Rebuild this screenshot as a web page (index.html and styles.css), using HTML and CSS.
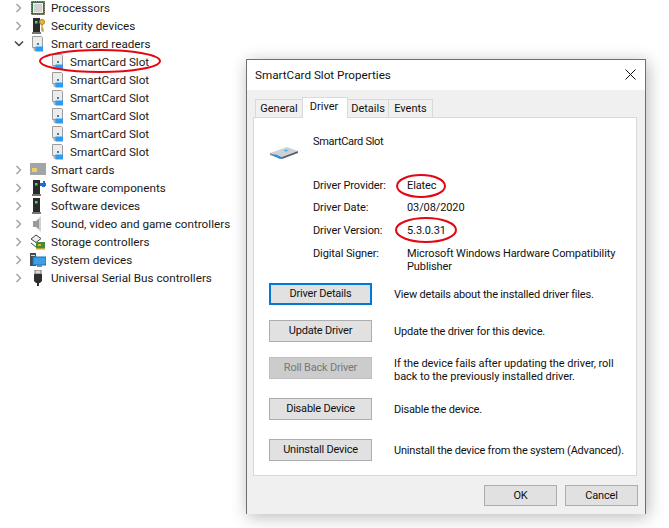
FILE: index.html
```html
<!DOCTYPE html>
<html lang="en">
<head>
<meta charset="utf-8">
<title>SmartCard Slot Properties</title>
<link rel="stylesheet" href="styles.css">
</head>
<body>
<svg class="sprite" width="0" height="0" aria-hidden="true">
  <symbol id="chev-r" viewBox="0 0 8 10"><path d="M1.500 1l4 4-4 4" fill="none" stroke="#a6a6a6" stroke-width="1.500"/></symbol>
  <symbol id="chev-d" viewBox="0 0 10 8"><path d="M1 1.500l4 4 4-4" fill="none" stroke="#404040" stroke-width="1.500"/></symbol>
  <symbol id="reader" viewBox="0 0 16 16">
    <path d="M2.500 .5h9l1 1v10h-10z" fill="#ececec" stroke="#9c9c9c"/>
    <path d="M3 12h3v3H4z" fill="#b5b5b5"/>
    <rect x="7" y="7" width="2" height="2" fill="#1e88d8"/>
    <rect x="5.500" y="10.500" width="7.500" height="5" fill="#2f9bee"/>
  </symbol>
  <symbol id="cpu" viewBox="0 0 16 16">
    <rect x="1.500" y="1.500" width="13" height="13" fill="#3f6f4d" stroke="#5a4a20" stroke-dasharray="1 .8"/>
    <rect x="3.500" y="3.500" width="9" height="9" fill="#cfd2cf" stroke="#eef0ee"/>
  </symbol>
  <symbol id="tower" viewBox="0 0 16 16">
    <rect x="3" y="0" width="7" height="14" fill="#2b2b2b"/>
    <rect x="2" y="14" width="9" height="2" fill="#777"/>
    <rect x="5" y="3" width="2.500" height="2.500" fill="#3fe05a"/>
  </symbol>
  <symbol id="key" viewBox="0 0 16 16">
    <use href="#tower"/>
    <circle cx="12" cy="4" r="2.500" fill="#e8b84a" stroke="#a87f20"/>
    <path d="M12 6.500v7M12 11h2M12 13h2" stroke="#b98d2c" stroke-width="1.200"/>
  </symbol>
  <symbol id="soft" viewBox="0 0 16 16">
    <use href="#tower"/>
    <path d="M10 3h3V1h2v2h1v3h-1v1h-3V6h-2z" fill="#1e6fd0"/>
  </symbol>
  <symbol id="cards" viewBox="0 0 16 16">
    <rect x="0" y="1" width="16" height="12" fill="#a0a5a8"/>
    <rect x="2" y="6" width="5" height="4" fill="#f0cf6a"/>
  </symbol>
  <symbol id="speaker" viewBox="0 0 16 16">
    <path d="M3 5h3l5-4.500v15L6 11H3z" fill="#9a9a9a"/>
    <path d="M9 2l2-1.500v15L9 14z" fill="#d0d0d0"/>
  </symbol>
  <symbol id="storage" viewBox="0 0 16 16">
    <path d="M1 5l5-4 5 3.500-5 4z" fill="#eee" stroke="#444"/>
    <path d="M1 9l5 4 2-1.500" fill="none" stroke="#444"/>
    <rect x="6" y="8" width="9" height="6" fill="#3f8f3f"/>
    <rect x="8" y="10" width="3" height="2" fill="#e0b030"/>
    <rect x="6" y="14" width="9" height="1.500" fill="#c8a030"/>
  </symbol>
  <symbol id="system" viewBox="0 0 16 16">
    <rect x="0" y="1" width="6" height="13" fill="#4a4a4a"/>
    <rect x="1" y="3" width="4" height="1" fill="#ddd"/>
    <rect x="3" y="5" width="13" height="8" fill="#3aa0e8" stroke="#1c6fb0"/>
    <rect x="7" y="13" width="5" height="2" fill="#888"/>
  </symbol>
  <symbol id="usb" viewBox="0 0 16 16">
    <rect x="5" y="0" width="6" height="4" fill="#d8d8d8" stroke="#777"/>
    <path d="M4 4h8v7l-2 2H6l-2-2z" fill="#2f2f2f"/>
    <rect x="7" y="13" width="2" height="3" fill="#2f2f2f"/>
  </symbol>
  <symbol id="device" viewBox="0 0 32 16">
    <path d="M2 8L19 2l11 4-16 6z" fill="#cfd1d4"/>
    <path d="M2 8l12 4v2L2 10z" fill="#8a8e93"/>
    <path d="M14 12l16-6v2l-16 6z" fill="#5c6065"/>
    <path d="M4 10l8 4 3-1-7-3.500z" fill="#1f8fe8"/>
    <path d="M15 5.500l3-1 3 1-3 1z" fill="#4fb0f0"/>
  </symbol>
</svg>

<ul class="tree">
  <li class="node"><svg class="chev"><use href="#chev-r"/></svg><svg class="icon"><use href="#cpu"/></svg><span class="label">Processors</span></li>
  <li class="node"><svg class="chev"><use href="#chev-r"/></svg><svg class="icon"><use href="#key"/></svg><span class="label">Security devices</span></li>
  <li class="node"><svg class="chev"><use href="#chev-d"/></svg><svg class="icon"><use href="#reader"/></svg><span class="label">Smart card readers</span></li>
  <li class="leaf selected"><svg class="icon"><use href="#reader"/></svg><span class="label">SmartCard Slot</span></li>
  <li class="leaf"><svg class="icon"><use href="#reader"/></svg><span class="label">SmartCard Slot</span></li>
  <li class="leaf"><svg class="icon"><use href="#reader"/></svg><span class="label">SmartCard Slot</span></li>
  <li class="leaf"><svg class="icon"><use href="#reader"/></svg><span class="label">SmartCard Slot</span></li>
  <li class="leaf"><svg class="icon"><use href="#reader"/></svg><span class="label">SmartCard Slot</span></li>
  <li class="leaf"><svg class="icon"><use href="#reader"/></svg><span class="label">SmartCard Slot</span></li>
  <li class="node"><svg class="chev"><use href="#chev-r"/></svg><svg class="icon"><use href="#cards"/></svg><span class="label">Smart cards</span></li>
  <li class="node"><svg class="chev"><use href="#chev-r"/></svg><svg class="icon"><use href="#soft"/></svg><span class="label">Software components</span></li>
  <li class="node"><svg class="chev"><use href="#chev-r"/></svg><svg class="icon"><use href="#tower"/></svg><span class="label">Software devices</span></li>
  <li class="node"><svg class="chev"><use href="#chev-r"/></svg><svg class="icon"><use href="#speaker"/></svg><span class="label">Sound, video and game controllers</span></li>
  <li class="node"><svg class="chev"><use href="#chev-r"/></svg><svg class="icon"><use href="#storage"/></svg><span class="label">Storage controllers</span></li>
  <li class="node"><svg class="chev"><use href="#chev-r"/></svg><svg class="icon"><use href="#system"/></svg><span class="label">System devices</span></li>
  <li class="node"><svg class="chev"><use href="#chev-r"/></svg><svg class="icon"><use href="#usb"/></svg><span class="label">Universal Serial Bus controllers</span></li>
</ul>

<section class="dialog">
  <header class="titlebar">
    <span class="title">SmartCard Slot Properties</span>
    <svg class="close" viewBox="0 0 11 11"><path d="M.5 .5l10 10M10.500 .5l-10 10" stroke="#111" stroke-width="1" fill="none"/></svg>
  </header>
  <div class="body">
    <nav class="tabs">
      <span class="tab">General</span>
      <span class="tab active">Driver</span>
      <span class="tab">Details</span>
      <span class="tab">Events</span>
    </nav>
    <div class="panel">
      <div class="device">
        <svg class="device-icon"><use href="#device"/></svg>
        <span class="device-name">SmartCard Slot</span>
      </div>
      <dl class="facts">
        <dt>Driver Provider:</dt><dd>Elatec</dd>
        <dt>Driver Date:</dt><dd>03/08/2020</dd>
        <dt>Driver Version:</dt><dd>5.3.0.31</dd>
        <dt>Digital Signer:</dt><dd>Microsoft Windows Hardware Compatibility Publisher</dd>
      </dl>
      <div class="actions">
        <div class="action a-details"><button class="btn focused">Driver Details</button><p>View details about the installed driver files.</p></div>
        <div class="action a-update"><button class="btn">Update Driver</button><p>Update the driver for this device.</p></div>
        <div class="action a-roll"><button class="btn disabled">Roll Back Driver</button><p>If the device fails after updating the driver, roll back to the previously installed driver.</p></div>
        <div class="action a-disable"><button class="btn">Disable Device</button><p>Disable the device.</p></div>
        <div class="action a-uninstall"><button class="btn">Uninstall Device</button><p>Uninstall the device from the system (Advanced).</p></div>
      </div>
    </div>
    <footer class="footer">
      <button class="btn wide">OK</button>
      <button class="btn wide">Cancel</button>
    </footer>
  </div>
</section>

<svg class="ring ring-slot" viewBox="0 0 122 24"><ellipse cx="61" cy="12" rx="60" ry="11"/></svg>
<svg class="ring ring-provider" viewBox="0 0 50 24"><ellipse cx="25" cy="12" rx="24" ry="11"/></svg>
<svg class="ring ring-version" viewBox="0 0 62 26"><ellipse cx="31" cy="13" rx="30" ry="12"/></svg>
</body>
</html>
```
FILE: styles.css
```css
* { box-sizing: border-box; }
html, body { margin: 0; padding: 0; height: 528px; overflow: hidden; background: #fff; }
body { font: 11px/16px Roboto, "Liberation Sans", sans-serif; color: #111; position: relative; }
.sprite { position: absolute; }

.tree { list-style: none; margin: -1px 0 0; padding: 0; }
.node, .leaf { display: flex; align-items: center; height: 18px; white-space: nowrap; }
.node { padding-left: 14px; }
.leaf { padding-left: 50px; }
.chev { width: 10px; height: 10px; margin-right: 6px; flex: none; }
.icon { width: 16px; height: 16px; flex: none; }
.node .label { margin-left: 5px; }
.leaf .label { margin-left: 4px; }
.label { font-size: 11.700px; color: #1a1a1a; }
.selected { position: relative; }
.selected::before { content: ""; position: absolute; left: 47px; top: 0; width: 106px; height: 18px; background: #cce8ff; z-index: -1; }

.dialog { position: absolute; left: 246px; top: 59px; width: 400px; height: 455px; background: #fff; border: 1px solid #6f6f6f; box-shadow: 2px 3px 16px rgba(0,0,0,.28); display: flex; flex-direction: column; }
.titlebar { height: 30px; display: flex; align-items: center; justify-content: space-between; padding: 0 9px 0 8px; flex: none; }
.title { font-size: 11.700px; color: #111; }
.close { width: 11px; height: 11px; margin-bottom: 2px; }
.body { flex: 1; background: #f0f0f0; padding: 7px 8px 8px 6px; display: flex; flex-direction: column; }
.tabs { display: flex; padding-left: 2px; height: 20px; align-items: flex-end; position: relative; z-index: 1; }
.tab { height: 18px; border: 1px solid #d9d9d9; border-bottom: 0; margin-left: -1px; line-height: 18px; background: #f0f0f0; text-align: center; }
.tab:nth-child(1) { width: 48px; margin-left: 0; }
.tab:nth-child(3) { width: 42px; }
.tab:nth-child(4) { width: 45px; }
.tab.active { width: 46px; height: 21px; margin-bottom: -1px; padding-right: 2px; background: #fff; line-height: 18px; position: relative; z-index: 1; }
.panel { height: 359px; background: #fff; border: 1px solid #d9d9d9; position: relative; }

.device { display: flex; align-items: flex-start; padding: 16px 0 0 14px; height: 57px; }
.device-icon { width: 32px; height: 16px; margin-top: 11px; flex: none; }
.device-name { margin-left: 13px; letter-spacing: -.3px; }

.facts { margin: 0; padding-left: 59px; display: grid; grid-template-columns: 94px 212px; grid-template-rows: 22px 23px 23px 30px; line-height: 13px; letter-spacing: -.1px; }
.facts dt, .facts dd { margin: 0; padding-top: 4px; white-space: normal; }
.actions { position: relative; margin-top: 10px; display: flex; flex-direction: column; }
.action { display: flex; align-items: flex-start; padding-left: 15px; }
.action p { margin: 0 0 0 22px; width: 240px; line-height: 13px; padding-top: 5px; letter-spacing: -.2px; }
.a-details { height: 37px; }
.a-update { height: 37px; }
.a-roll { height: 41px; }
.a-disable { height: 41px; }
.a-details p { white-space: nowrap; }
.a-uninstall p { white-space: nowrap; }
.a-roll p { padding-top: 0; width: 225px; letter-spacing: -.05px; }

.btn { font: inherit; letter-spacing: -.2px; width: 103px; height: 22px; padding: 0; background: #e1e1e1; border: 1px solid #adadad; color: #111; flex: none; }
.btn.focused { border: 2px solid #0078d7; }
.btn.disabled { background: #ccc; border-color: #bfbfbf; color: #787878; }
.footer { display: flex; justify-content: flex-end; gap: 8px; padding: 9px 0 0; margin-right: -1px; }
.btn.wide { width: 73px; height: 21px; }

.ring { position: absolute; fill: none; stroke: #e30613; stroke-width: 2; z-index: 5; }
.ring-slot { left: 39px; top: 49px; width: 122px; height: 24px; }
.ring-provider { left: 396px; top: 174px; width: 50px; height: 24px; }
.ring-version { left: 395px; top: 217px; width: 62px; height: 26px; }
```
